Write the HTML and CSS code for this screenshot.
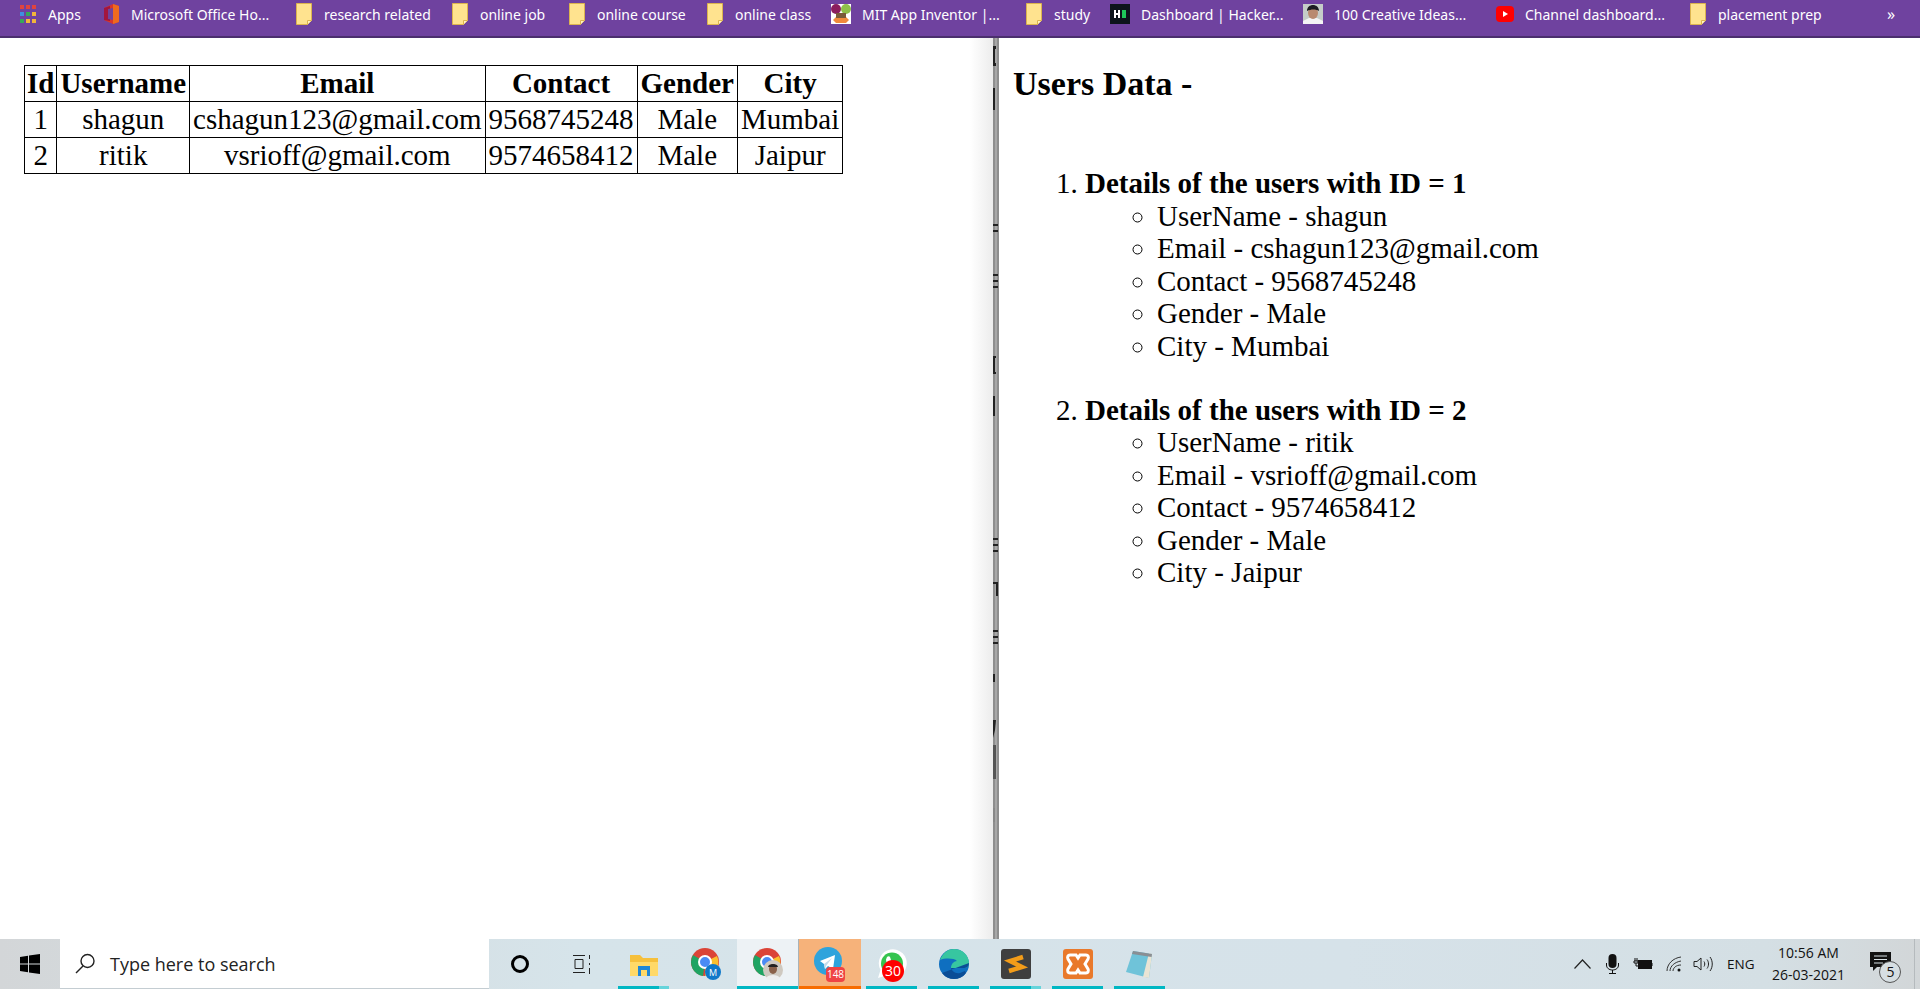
FILE: index.html
```html
<!DOCTYPE html>
<html lang="en">
<head>
    <meta charset="UTF-8">
    <title>Users Data</title>
    <link rel="stylesheet" href="styles.css">
</head>
<body>
    <svg class="defs" width="0" height="0">
        <symbol id="folder" viewBox="0 0 16 22">
            <path d="M.5.5h15v17l-4 4H.5z" fill="#ffe38f" stroke="#dcb44f"/>
            <path d="M11.5 21.5v-4h4" fill="#fff2c4" stroke="#dcb44f"/>
        </symbol>
    </svg>

    <nav class="bookmarks">
        <a class="bookmark">
            <svg width="16" height="20" viewBox="0 0 16 20">
                <rect x="0" y="1" width="4" height="4" fill="#e0443e"/><rect x="6" y="1" width="4" height="4" fill="#e0443e"/><rect x="12" y="1" width="4" height="4" fill="#e0443e"/>
                <rect x="0" y="8" width="4" height="4" fill="#3f8fe0"/><rect x="6" y="8" width="4" height="4" fill="#37a85a"/><rect x="12" y="8" width="4" height="4" fill="#f2b53a"/>
                <rect x="0" y="15" width="4" height="4" fill="#37a85a"/><rect x="6" y="15" width="4" height="4" fill="#f2b53a"/><rect x="12" y="15" width="4" height="4" fill="#f2b53a"/>
            </svg>
            <span class="apps-label">Apps</span>
        </a>
        <a class="bookmark">
            <svg width="16" height="20" viewBox="0 0 16 20">
                <path d="M1 4l9-4 6 2v16l-6 2-9-4z" fill="#d9362a"/>
                <path d="M1 4l6-2v15l-6-1z" fill="#a3153f"/>
                <path d="M5 5l5-1v12l-5-1z" fill="#6f429f"/>
                <path d="M10 0l6 2v16l-6 2z" fill="#ee6a1f"/>
            </svg>
            <span class="label">Microsoft Office Ho...</span>
        </a>
        <a class="bookmark"><svg width="16" height="22"><use href="#folder"/></svg><span class="label">research related</span></a>
        <a class="bookmark"><svg width="16" height="22"><use href="#folder"/></svg><span class="label">online job</span></a>
        <a class="bookmark"><svg width="16" height="22"><use href="#folder"/></svg><span class="label">online course</span></a>
        <a class="bookmark"><svg width="16" height="22"><use href="#folder"/></svg><span class="label">online class</span></a>
        <a class="bookmark">
            <svg class="icon-wide" width="20" height="20" viewBox="0 0 20 20">
                <rect width="20" height="20" fill="#fff"/>
                <circle cx="5" cy="5" r="5" fill="#8c1d5e"/>
                <circle cx="15" cy="5" r="5" fill="#8fbf4a"/>
                <path d="M2 16l4-4h8l4 4-3 3H5z" fill="#f08a3c"/>
                <rect x="5" y="9" width="10" height="5" fill="#7a5a3a"/>
            </svg>
            <span class="label">MIT App Inventor |...</span>
        </a>
        <a class="bookmark"><svg width="16" height="22"><use href="#folder"/></svg><span class="label">study</span></a>
        <a class="bookmark">
            <svg class="icon-wide" width="20" height="20" viewBox="0 0 20 20">
                <rect width="20" height="20" fill="#0d141c"/>
                <path d="M4 6h2v3h2V6h2v8H8v-3H6v3H4z" fill="#fff"/>
                <rect x="12" y="6" width="4" height="8" fill="#1ec85a"/>
            </svg>
            <span class="label">Dashboard | Hacker...</span>
        </a>
        <a class="bookmark">
            <svg class="icon-wide" width="20" height="20" viewBox="0 0 20 20">
                <rect width="20" height="20" fill="#c5ccc8"/>
                <path d="M0 20v-3l6-3h8l6 3v3z" fill="#f4f4f4"/>
                <ellipse cx="10" cy="9" rx="5" ry="6" fill="#b98a70"/>
                <path d="M4 7c0-4 3-6 6-6s6 2 6 6c-3-2-8-2-12 0z" fill="#1c1c22"/>
            </svg>
            <span class="label">100 Creative Ideas...</span>
        </a>
        <a class="bookmark">
            <svg class="icon-yt" width="18" height="16" viewBox="0 0 18 16">
                <rect width="18" height="16" rx="4" fill="#f00"/>
                <path d="M7 5l5 3-5 3z" fill="#fff"/>
            </svg>
            <span class="label">Channel dashboard...</span>
        </a>
        <a class="bookmark"><svg width="16" height="22"><use href="#folder"/></svg><span class="label">placement prep</span></a>
        <a class="bookmark more">»</a>
    </nav>

    <main class="panes">
        <section class="pane-left">
            <table class="users">
                <thead>
                    <tr><th>Id</th><th>Username</th><th>Email</th><th>Contact</th><th>Gender</th><th>City</th></tr>
                </thead>
                <tbody>
                    <tr><td>1</td><td>shagun</td><td>cshagun123@gmail.com</td><td>9568745248</td><td>Male</td><td>Mumbai</td></tr>
                    <tr><td>2</td><td>ritik</td><td>vsrioff@gmail.com</td><td>9574658412</td><td>Male</td><td>Jaipur</td></tr>
                </tbody>
            </table>
        </section>

        <!-- bits of the window behind show through the gap -->
        <svg class="divider" width="6" height="901" viewBox="0 0 6 901">
            <rect width="6" height="901" fill="#8e8e8e"/>
            <rect x="2" width="2" height="901" fill="#a8a8a8"/>
            <g fill="#222">
                <path d="M0 8h3v3H2v14h1v3H0z"/>
                <rect x="0" y="50" width="2" height="22"/>
                <rect x="0" y="186" width="5" height="2"/><rect x="0" y="192" width="5" height="2"/>
                <rect x="0" y="236" width="5" height="2"/><rect x="0" y="242" width="5" height="2"/><rect x="0" y="248" width="5" height="2"/>
                <path d="M0 318h3v2H2v14h1v2H0z"/>
                <rect x="0" y="358" width="2" height="20"/>
                <rect x="0" y="500" width="5" height="2"/><rect x="0" y="506" width="5" height="2"/><rect x="0" y="512" width="5" height="2"/>
                <rect x="0" y="544" width="5" height="2"/><rect x="3" y="546" width="2" height="12"/>
                <rect x="0" y="592" width="5" height="2"/><rect x="0" y="598" width="5" height="2"/><rect x="0" y="604" width="5" height="2"/>
                <rect x="0" y="636" width="2" height="8"/>
                <path d="M0 682h3l-1 10-2 8z"/>
                <rect x="0" y="707" width="3" height="34" fill="#555"/>
                <rect x="0" y="770" width="2" height="14" fill="#888"/>
            </g>
        </svg>

        <section class="pane-right">
            <h2 class="title">Users Data -</h2>
            <ol class="user-list">
                <li>
                    <b>Details of the users with ID = 1</b>
                    <ul>
                        <li>UserName - shagun</li>
                        <li>Email - cshagun123@gmail.com</li>
                        <li>Contact - 9568745248</li>
                        <li>Gender - Male</li>
                        <li>City - Mumbai</li>
                    </ul>
                </li>
                <li>
                    <b>Details of the users with ID = 2</b>
                    <ul>
                        <li>UserName - ritik</li>
                        <li>Email - vsrioff@gmail.com</li>
                        <li>Contact - 9574658412</li>
                        <li>Gender - Male</li>
                        <li>City - Jaipur</li>
                    </ul>
                </li>
            </ol>
        </section>
    </main>

    <footer class="taskbar">
        <div class="start">
            <svg width="20" height="20" viewBox="0 0 20 20"><path d="M0 3l8-1.2V9.400H0zM9 1.600L20 0v9.400H9zM0 10.600h8v7.600L0 17zM9 10.600h11V20L9 18.400z" fill="#000"/></svg>
        </div>
        <div class="search">
            <svg width="21" height="21" viewBox="0 0 21 21" fill="none" stroke="#222" stroke-width="1.400"><circle cx="12.500" cy="8" r="6.500"/><path d="M8 13L1 20"/></svg>
            <span>Type here to search</span>
        </div>
        <div class="pinned">
            <div class="slot">
                <svg width="20" height="20" viewBox="0 0 20 20"><circle cx="10" cy="10" r="7.500" fill="none" stroke="#000" stroke-width="3"/></svg>
            </div>
            <div class="slot">
                <svg width="20" height="20" viewBox="0 0 20 20" fill="none" stroke="#222"><path d="M1 1.500h12M1 18.500h12M3 5.500h8v9H3zM17.500 1v4M17.500 9v2M17.500 14v6"/></svg>
            </div>
            <div class="slot running-split">
                <svg width="30" height="28" viewBox="0 0 30 28">
                    <path d="M1 5h10l3 3h15v18H1z" fill="#f6c03c"/>
                    <path d="M1 12h28v14H1z" fill="#ffd968"/>
                    <path d="M9 16h12v10h-3v-6h-6v6H9z" fill="#1f87d6"/>
                </svg>
            </div>
            <div class="slot">
                <svg width="30" height="32" viewBox="0 0 30 32">
                    <circle cx="14" cy="14" r="14" fill="#db4437"/>
                    <path d="M14 14L2 7a14 14 0 0 0 10 21z" fill="#1fa463"/>
                    <path d="M14 14l12-6a14 14 0 0 1-12 20z" fill="#fbc02d"/>
                    <circle cx="14" cy="14" r="6" fill="#4a8bf5" stroke="#fff" stroke-width="2"/>
                    <circle cx="22" cy="24" r="8" fill="#0f78c9"/>
                    <text class="badge-m" x="22" y="27.500">M</text>
                </svg>
            </div>
            <div class="slot active">
                <svg width="30" height="32" viewBox="0 0 30 32">
                    <circle cx="14" cy="14" r="14" fill="#db4437"/>
                    <path d="M14 14L2 7a14 14 0 0 0 10 21z" fill="#1fa463"/>
                    <path d="M14 14l12-6a14 14 0 0 1-12 20z" fill="#fbc02d"/>
                    <circle cx="14" cy="14" r="6" fill="#4a8bf5" stroke="#fff" stroke-width="2"/>
                    <circle cx="20" cy="22" r="10" fill="#cfc9c0"/>
                    <ellipse cx="20" cy="21" rx="4" ry="5" fill="#8a6048"/>
                    <path d="M15 19c0-4 10-4 10 0z" fill="#222"/>
                    <path d="M13 30c2-4 12-4 14 0a10 10 0 0 1-14 0z" fill="#eee"/>
                </svg>
            </div>
            <div class="slot telegram">
                <svg width="32" height="34" viewBox="0 0 32 34">
                    <circle cx="14" cy="14" r="14" fill="#2fa3dc"/>
                    <path d="M6 14l15-6-2 14-5-3-3 3-1-5z" fill="#fff"/>
                    <path d="M10 17l8-6-6 8-1 3z" fill="#c4dbea"/>
                </svg>
                <span class="badge badge-tg">148</span>
            </div>
            <div class="slot running">
                <svg width="30" height="30" viewBox="0 0 30 30">
                    <path d="M1 29l2.500-8A14 14 0 1 1 9 26.500z" fill="#fff"/>
                    <circle cx="15" cy="14.500" r="11" fill="#35c44f"/>
                    <path d="M10 8c1-1 2.500-1 3 0l1 3-1 2c1 2 2 3 4 4l2-1 3 1.500c0 2-1 3-3 3-5 0-10-5-10-10z" fill="#fff"/>
                </svg>
                <span class="badge badge-wa">30</span>
            </div>
            <div class="slot running">
                <svg width="30" height="30" viewBox="0 0 30 30">
                    <circle cx="15" cy="15" r="15" fill="#0f6fc0"/>
                    <path d="M1 11C4 3 10 0 15 0c8 0 15 6 15 14 0 3-2 5-6 5H12c0-4 3-7 6-7-3-3-12-3-17-1z" fill="#37c6a0"/>
                    <path d="M30 14c0 3-2 5-6 5H12c1 3 4 6 9 5l5-2 1 2c-3 4-7 6-12 6A15 15 0 0 1 3 24" fill="#0a4d96"/>
                </svg>
            </div>
            <div class="slot running-split">
                <svg width="30" height="30" viewBox="0 0 30 30">
                    <rect width="30" height="30" rx="3" fill="#3f3f3f"/>
                    <path d="M22 8L9 12l12 6-13 4" fill="none" stroke="#f39c19" stroke-width="4.500"/>
                </svg>
            </div>
            <div class="slot running">
                <svg width="30" height="30" viewBox="0 0 30 30">
                    <rect width="30" height="30" rx="3" fill="#e9792b"/>
                    <path d="M7 6h6l2 3 2-3h6c2 0 3 2 2 4l-3 5 3 5c1 2 0 4-2 4h-6l-2-3-2 3H7c-2 0-3-2-2-4l3-5-3-5c-1-2 0-4 2-4z" fill="none" stroke="#fff" stroke-width="3"/>
                </svg>
            </div>
            <div class="slot running">
                <svg width="30" height="30" viewBox="0 0 30 30">
                    <path d="M8 2l19 3-3 24-23-6z" fill="#6fc3d9"/>
                    <path d="M24 4l3 1-3 24-6-1z" fill="#e9e4d4"/>
                    <path d="M8 2l19 3-.4 3L7 5z" fill="#8a8f94"/>
                </svg>
            </div>
        </div>
        <div class="tray">
            <svg class="tray-chevron" width="17" height="10" viewBox="0 0 17 10" fill="none" stroke="#222" stroke-width="1.200"><path d="M.5 9.500L8.500 1l8 8.500"/></svg>
            <svg class="tray-mic" width="13" height="20" viewBox="0 0 13 20"><rect x="2.500" width="8" height="14" rx="4" fill="#111"/><path d="M.5 9v2c0 3 2.500 5 6 5s6-2 6-5V9M6.500 16v3M3 19.500h7" fill="none" stroke="#111"/></svg>
            <svg class="tray-battery" width="20" height="12" viewBox="0 0 20 12"><rect x="5.500" y="2.500" width="13" height="8" fill="#111" stroke="#111"/><path d="M19 5v3" stroke="#111"/><path d="M2 0v3M4 0v3M1 3h4v2H1zM3 5v3h3" fill="none" stroke="#111"/></svg>
            <svg class="tray-wifi" width="16" height="16" viewBox="0 0 16 16" fill="none" stroke="#333"><path d="M1 15C1 8 7 2 15 1M4 15c0-5 5-9 11-10M7 15c0-3 3-6 8-6"/><circle cx="13" cy="14" r="1.500" fill="#111" stroke="none"/></svg>
            <svg class="tray-speaker" width="20" height="16" viewBox="0 0 20 16" fill="none" stroke="#222"><path d="M1 5.500h3L8 2v12l-4-3.500H1zM11 5.500c1 1.500 1 3.500 0 5M14 3.500c2 2.500 2 6.500 0 9M17 1c3 4 3 10 0 14"/></svg>
            <span class="tray-lang">ENG</span>
            <div class="clock"><span>10:56 AM</span><span>26-03-2021</span></div>
            <div class="notify">
                <svg width="21" height="19" viewBox="0 0 21 19"><path d="M0 0h21v15H7l-4 4v-4H0z" fill="#111"/><path d="M4 4h13M4 7.500h13M4 11h9" stroke="#d8e2e6"/></svg>
                <span class="notify-count">5</span>
            </div>
            <div class="show-desktop"></div>
        </div>
    </footer>
</body>
</html>
```

FILE: styles.css
```css
html, body {
    height: 100%;
}
body {
    margin: 0;
    display: flex;
    flex-direction: column;
    height: 989px;
    overflow: hidden;
    background-color: #fff;
    color: #000;
}
.defs {
    position: absolute;
}

/* bookmarks bar */
.bookmarks {
    display: grid;
    grid-template-columns: 83px 193px 156px 117px 138px 124px 195px 84px 193px 193px 194px 197px 1fr;
    align-items: center;
    height: 28px;
    padding: 0 0 8px 20px;
    background-color: #6f429f;
    border-bottom: 2px solid #4b2f6e;
    font-family: "Noto Sans", sans-serif;
    font-size: 14px;
    color: #fff;
}
.bookmark {
    display: flex;
    align-items: center;
    white-space: nowrap;
}
.bookmark svg {
    flex: none;
}
.label {
    margin-left: 12px;
}
.apps-label {
    margin-left: 12px;
}
.icon-wide + .label {
    margin-left: 11px;
}
.icon-yt + .label {
    margin-left: 11px;
}
.more {
    font-size: 16px;
}

/* page area */
.panes {
    flex: 1;
    display: flex;
    font-family: "Liberation Serif", serif;
    font-size: 29px;
    line-height: 32.5px;
}
.pane-left {
    width: 993px;
    padding: 27px 0 0 24px;
    box-sizing: border-box;
    background: linear-gradient(to right, #fff 970px, #ececec 100%);
}
.divider {
    flex: none;
}
.pane-right {
    flex: 1;
    padding-left: 14px;
}

.users {
    border-collapse: collapse;
    text-align: center;
}
.users th, .users td {
    border: 1px solid #000;
    padding: 1px 3px;
    line-height: 33px;
}
.users th:first-child, .users td:first-child {
    padding: 1px 2px;
}
.title {
    margin: 26px 0 0;
    font-size: 34px;
    line-height: 39px;
}
.user-list {
    margin: 64px 0 0;
    padding-left: 72px;
}
.user-list > li {
    margin-bottom: 31.500px;
}
.user-list ul {
    margin: 0;
    padding-left: 72px;
    list-style-type: circle;
}

/* windows taskbar */
.taskbar {
    display: flex;
    height: 50px;
    background: linear-gradient(to right, #d3d6d8 0, #d6e4ea 30%, #d6e2e9 70%, #d4dfe4 92%, #d2d6d8 100%);
    font-family: "Open Sans", sans-serif;
    color: #111;
}
.start {
    display: flex;
    align-items: center;
    justify-content: center;
    width: 60px;
}
.search {
    display: flex;
    align-items: center;
    gap: 14px;
    width: 429px;
    padding-left: 15px;
    box-sizing: border-box;
    background-color: #fff;
    border-bottom: 1px solid #c4cdd2;
    font-size: 18px;
    color: #222;
}
.pinned {
    display: flex;
}
.slot {
    display: flex;
    align-items: center;
    justify-content: center;
    position: relative;
    box-sizing: border-box;
    width: 62px;
    height: 50px;
}
.running::after, .running-split::after, .active::after, .telegram::after {
    content: "";
    position: absolute;
    left: 5px;
    right: 6px;
    bottom: 0;
    height: 3px;
    background-color: #00b7c3;
}
.running-split::after {
    background: linear-gradient(to right, #00b7c3 80%, #66d4db 80%);
}
.active {
    background-color: #edf2f5;
    border-right: 1px solid #a9b3b8;
}
.active::after {
    left: 0;
    right: 0;
}
.telegram {
    background-color: #f6b27a;
}
.telegram::after {
    left: 0;
    right: 0;
    background-color: #f76c00;
}
.badge {
    position: absolute;
    font-family: "Open Sans", sans-serif;
    color: #fff;
    text-align: center;
}
.badge-tg {
    left: 27px;
    top: 28px;
    width: 19px;
    height: 15px;
    border-radius: 4px;
    background-color: #ef4444;
    font-size: 10px;
    line-height: 15px;
}
.badge-wa {
    left: 21px;
    top: 21px;
    width: 22px;
    height: 22px;
    border-radius: 50%;
    background-color: #f00;
    font-size: 14px;
    line-height: 22px;
}
.badge-m {
    font-family: "Open Sans", sans-serif;
    font-size: 9px;
    fill: #fff;
    text-anchor: middle;
}
.tray {
    flex: 1;
    display: flex;
    align-items: center;
    padding-left: 403px;
}
.tray-mic {
    margin-left: 15px;
}
.tray-battery {
    margin-left: 14px;
}
.tray-wifi {
    margin-left: 13px;
}
.tray-speaker {
    margin-left: 11px;
}
.tray-lang {
    margin-left: 14px;
    font-size: 13.500px;
}
.clock {
    display: flex;
    flex-direction: column;
    align-items: center;
    width: 84px;
    margin-left: 12px;
    font-size: 14px;
    line-height: 22px;
}
.notify {
    position: relative;
    margin-left: 20px;
    margin-top: -6px;
    line-height: 0;
}
.notify-count {
    position: absolute;
    left: 9px;
    top: 9px;
    width: 20px;
    height: 20px;
    border: 1px solid #555;
    border-radius: 50%;
    background-color: #d6dee2;
    font-size: 14px;
    line-height: 20px;
    text-align: center;
}
.show-desktop {
    align-self: stretch;
    width: 5px;
    margin-left: auto;
    border-left: 1px solid #b5babd;
}
```
